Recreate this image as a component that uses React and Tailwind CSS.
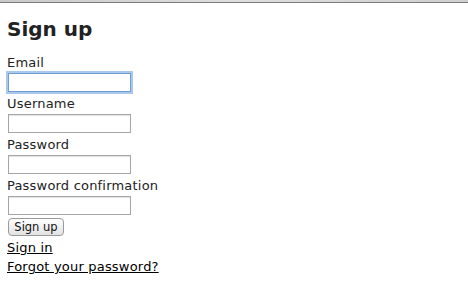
import React from 'react';

const Field = ({ label, type = 'text', focused = false }) => (
  <div className="mb-[3px]">
    <label className="block leading-[17px]">{label}</label>
    <input
      type={type}
      className={
        'mt-[2px] ml-px block h-[19px] w-[123px] bg-white outline-none ' +
        (focused
          ? 'border border-[#6f9dd6] shadow-[0_0_0_2px_#a9c8ec]'
          : 'border border-[#a6a6a6] shadow-[inset_0_1px_1px_rgba(0,0,0,0.12)]')
      }
    />
  </div>
);

const App = () => {
  return (
    <div className="min-h-[281px] bg-white text-[13px] tracking-[0.2px] text-[#222] font-['DejaVu_Sans',Verdana,sans-serif]">
      <div className="h-[2px] bg-gradient-to-r from-[#c9c9c9] via-[#dedede] to-[#cfcfcf]" />
      <div className="h-px bg-[#7b7b7b]" />

      <div className="pl-[7px]">
        <h1 className="mt-[14px] mb-[13px] text-[20px] leading-[24px] font-bold tracking-normal text-[#222]">Sign up</h1>

        <form onSubmit={(e) => e.preventDefault()}>
          <Field label="Email" type="email" focused />
          <Field label="Username" />
          <Field label="Password" type="password" />
          <Field label="Password confirmation" type="password" />

          <button
            type="submit"
            className="mt-[2px] ml-px block h-[18px] w-[56px] rounded-[4px] border border-[#9a9a9a] bg-gradient-to-b from-white to-[#e2e2e2] text-[11.5px] leading-[16px] tracking-normal text-[#111]"
          >
            Sign up
          </button>
        </form>

        <div className="mt-[2px] leading-[19px] text-black">
          <a href="#" className="block w-fit underline">Sign in</a>
          <a href="#" className="block w-fit underline">Forgot your password?</a>
        </div>
      </div>
    </div>
  );
};

export default App;
